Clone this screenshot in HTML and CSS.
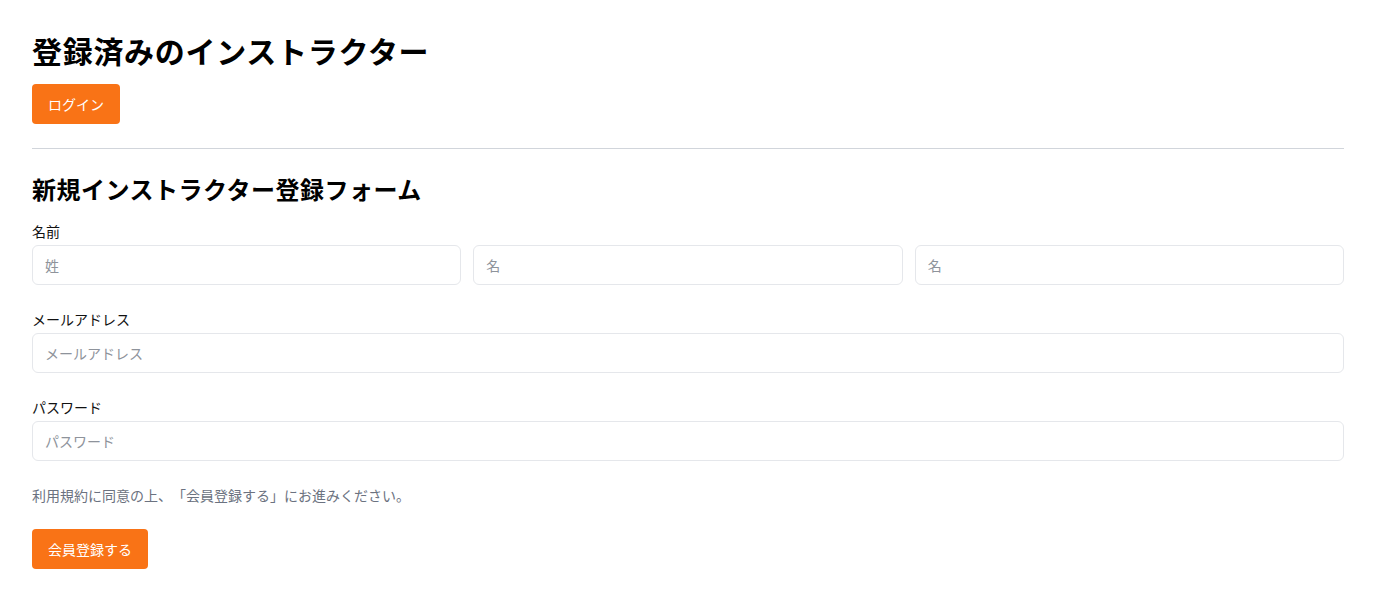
FILE: index.html
```html
<!DOCTYPE html>
<html lang="ja">
<head>
<meta charset="utf-8">
<title>インストラクター登録</title>
<link rel="stylesheet" href="styles.css">
</head>
<body>
<main class="page">
  <h1 class="title">登録済みのインストラクター</h1>
  <button class="btn" type="button">ログイン</button>
  <hr class="divider">
  <h2 class="subtitle">新規インストラクター登録フォーム</h2>
  <form class="form">
    <div class="field">
      <label class="label">名前</label>
      <div class="row3">
        <input class="input" type="text" placeholder="姓">
        <input class="input" type="text" placeholder="名">
        <input class="input" type="text" placeholder="名">
      </div>
    </div>
    <div class="field">
      <label class="label">メールアドレス</label>
      <input class="input" type="email" placeholder="メールアドレス">
    </div>
    <div class="field">
      <label class="label">パスワード</label>
      <input class="input" type="password" placeholder="パスワード">
    </div>
    <p class="note">利用規約に同意の上、「会員登録する」にお進みください。</p>
    <div><button class="btn" type="button">会員登録する</button></div>
  </form>
</main>
</body>
</html>
```
FILE: styles.css
```css
* { box-sizing: border-box; }
html, body { margin: 0; padding: 0; background: #fff; }
body {
  font-family: "Noto Sans CJK JP", "Noto Sans", sans-serif;
  color: #000;
  text-spacing-trim: space-all;
}
.page {
  padding: 32px;
  display: flex;
  flex-direction: column;
  align-items: flex-start;
}
.title {
  margin: 0 0 16px;
  font-size: 30px;
  line-height: 36px;
  font-weight: 700;
  letter-spacing: 0.7px;
}
.btn {
  height: 40px;
  padding: 0 16px;
  border: none;
  border-radius: 4px;
  background: #f97316;
  color: #fff;
  font-family: inherit;
  font-size: 14px;
  line-height: 20px;
  cursor: pointer;
}
.divider {
  align-self: stretch;
  margin: 24px 0;
  border: none;
  border-top: 1px solid #d1d5db;
  height: 0;
}
.subtitle {
  margin: 0 0 16px;
  font-size: 24px;
  line-height: 32px;
  font-weight: 700;
  letter-spacing: 0.5px;
}
.form {
  align-self: stretch;
  display: flex;
  flex-direction: column;
  gap: 24px;
}
.field {
  display: flex;
  flex-direction: column;
  gap: 4px;
}
.label {
  font-size: 14px;
  line-height: 20px;
  color: #111;
}
.row3 {
  display: grid;
  grid-template-columns: 1fr 1fr 1fr;
  gap: 12px;
}
.input {
  width: 100%;
  height: 40px;
  padding: 0 12px;
  border: 1px solid #e5e7eb;
  border-radius: 6px;
  font-family: inherit;
  font-size: 14px;
  color: #111;
  background: #fff;
  outline: none;
}
.input::placeholder { color: #8e939b; }
.note {
  margin: 0;
  font-size: 14px;
  line-height: 20px;
  color: #6b7280;
}
```
